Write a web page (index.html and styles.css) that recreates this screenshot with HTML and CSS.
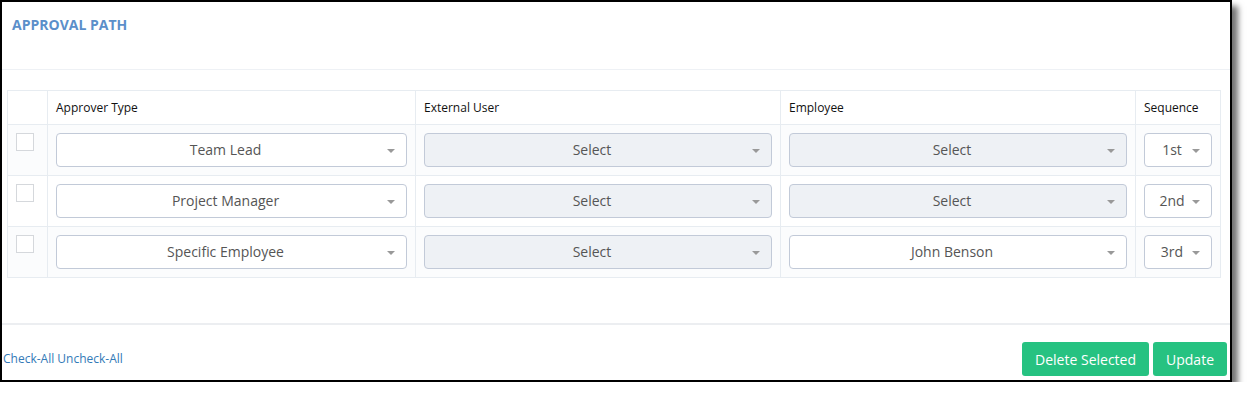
FILE: index.html
```html
<!DOCTYPE html>
<html lang="en">
<head>
    <meta charset="UTF-8">
    <title>Approval Path</title>
    <link rel="stylesheet" href="styles.css">
</head>
<body>
    <div class="frame">
        <div class="portlet-title">
            <span class="caption">APPROVAL PATH</span>
        </div>
        <div class="portlet-body">
            <table class="approvers">
                <thead>
                    <tr>
                        <th class="col-check"></th>
                        <th class="col-type">Approver Type</th>
                        <th class="col-ext">External User</th>
                        <th class="col-emp">Employee</th>
                        <th class="col-seq">Sequence</th>
                    </tr>
                </thead>
                <tbody>
                    <tr>
                        <td><span class="check"></span></td>
                        <td><div class="select">Team Lead</div></td>
                        <td><div class="select disabled">Select</div></td>
                        <td><div class="select disabled">Select</div></td>
                        <td><div class="select">1st</div></td>
                    </tr>
                    <tr>
                        <td><span class="check"></span></td>
                        <td><div class="select">Project Manager</div></td>
                        <td><div class="select disabled">Select</div></td>
                        <td><div class="select disabled">Select</div></td>
                        <td><div class="select">2nd</div></td>
                    </tr>
                    <tr>
                        <td><span class="check"></span></td>
                        <td><div class="select">Specific Employee</div></td>
                        <td><div class="select disabled">Select</div></td>
                        <td><div class="select">John Benson</div></td>
                        <td><div class="select">3rd</div></td>
                    </tr>
                </tbody>
            </table>
        </div>
        <div class="form-actions">
            <div class="links">
                <a href="#">Check-All</a> <a href="#">Uncheck-All</a>
            </div>
            <div class="buttons">
                <button class="btn">Delete Selected</button>
                <button class="btn">Update</button>
            </div>
        </div>
    </div>
</body>
</html>
```

FILE: styles.css
```css
body {
    margin: 0;
    background: #ffffff;
    font-family: "Open Sans", "Liberation Sans", sans-serif;
}

.frame {
    width: 1228px;
    height: 378px;
    border: 2px solid #000;
    background: #fff;
    box-shadow: 6px 6px 6px rgba(0, 0, 0, 0.55);
    display: flex;
    flex-direction: column;
}

.portlet-title {
    height: 67px;
    padding-left: 10px;
    border-bottom: 1px solid #eef1f5;
}

.caption {
    display: block;
    padding-top: 14px;
    font-size: 14px;
    font-weight: 700;
    color: #5b8fca;
    line-height: 18px;
}

.portlet-body {
    padding: 20px 9px 0 5px;
    height: 233px;
    border-bottom: 2px solid #eceef1;
}

.approvers {
    width: 1214px;
    border-collapse: collapse;
    table-layout: fixed;
}

.approvers th,
.approvers td {
    border: 1px solid #e7ecf1;
    padding: 8px;
}

.approvers th {
    height: 17px;
    font-size: 12px;
    font-weight: 400;
    color: #111;
    text-align: left;
    line-height: 17px;
}

.approvers tbody tr:nth-child(odd) {
    background: #fbfcfd;
}

.col-check { width: 23px; }
.col-type { width: 351px; }
.col-ext { width: 348px; }
.col-emp { width: 338px; }

.approvers td {
    height: 34px;
    vertical-align: top;
}

.check {
    display: block;
    width: 16px;
    height: 16px;
    border: 1px solid #d5d8dc;
    background: #fff;
}

.select {
    position: relative;
    height: 32px;
    line-height: 32px;
    border: 1px solid #c2cad8;
    border-radius: 4px;
    background: #fff;
    padding: 0 24px 0 12px;
    font-size: 14px;
    color: #555;
    text-align: center;
    white-space: nowrap;
}

.select.disabled {
    background: #eef1f5;
}

.select::after {
    content: "";
    position: absolute;
    right: 11px;
    top: 15px;
    border-left: 4px solid transparent;
    border-right: 4px solid transparent;
    border-top: 4px solid #999;
}

.form-actions {
    flex: 1;
    display: flex;
    justify-content: space-between;
    align-items: flex-start;
    padding: 17px 3px 0 1px;
}

.links {
    padding-top: 8px;
    font-size: 12px;
}

.links a {
    color: #337ab7;
    text-decoration: none;
}

.buttons {
    display: flex;
    gap: 4px;
}

.btn {
    font-family: inherit;
    font-size: 14px;
    color: #fff;
    background: #26c281;
    border: none;
    border-radius: 3px;
    height: 34px;
    padding: 0 13px;
}
```
